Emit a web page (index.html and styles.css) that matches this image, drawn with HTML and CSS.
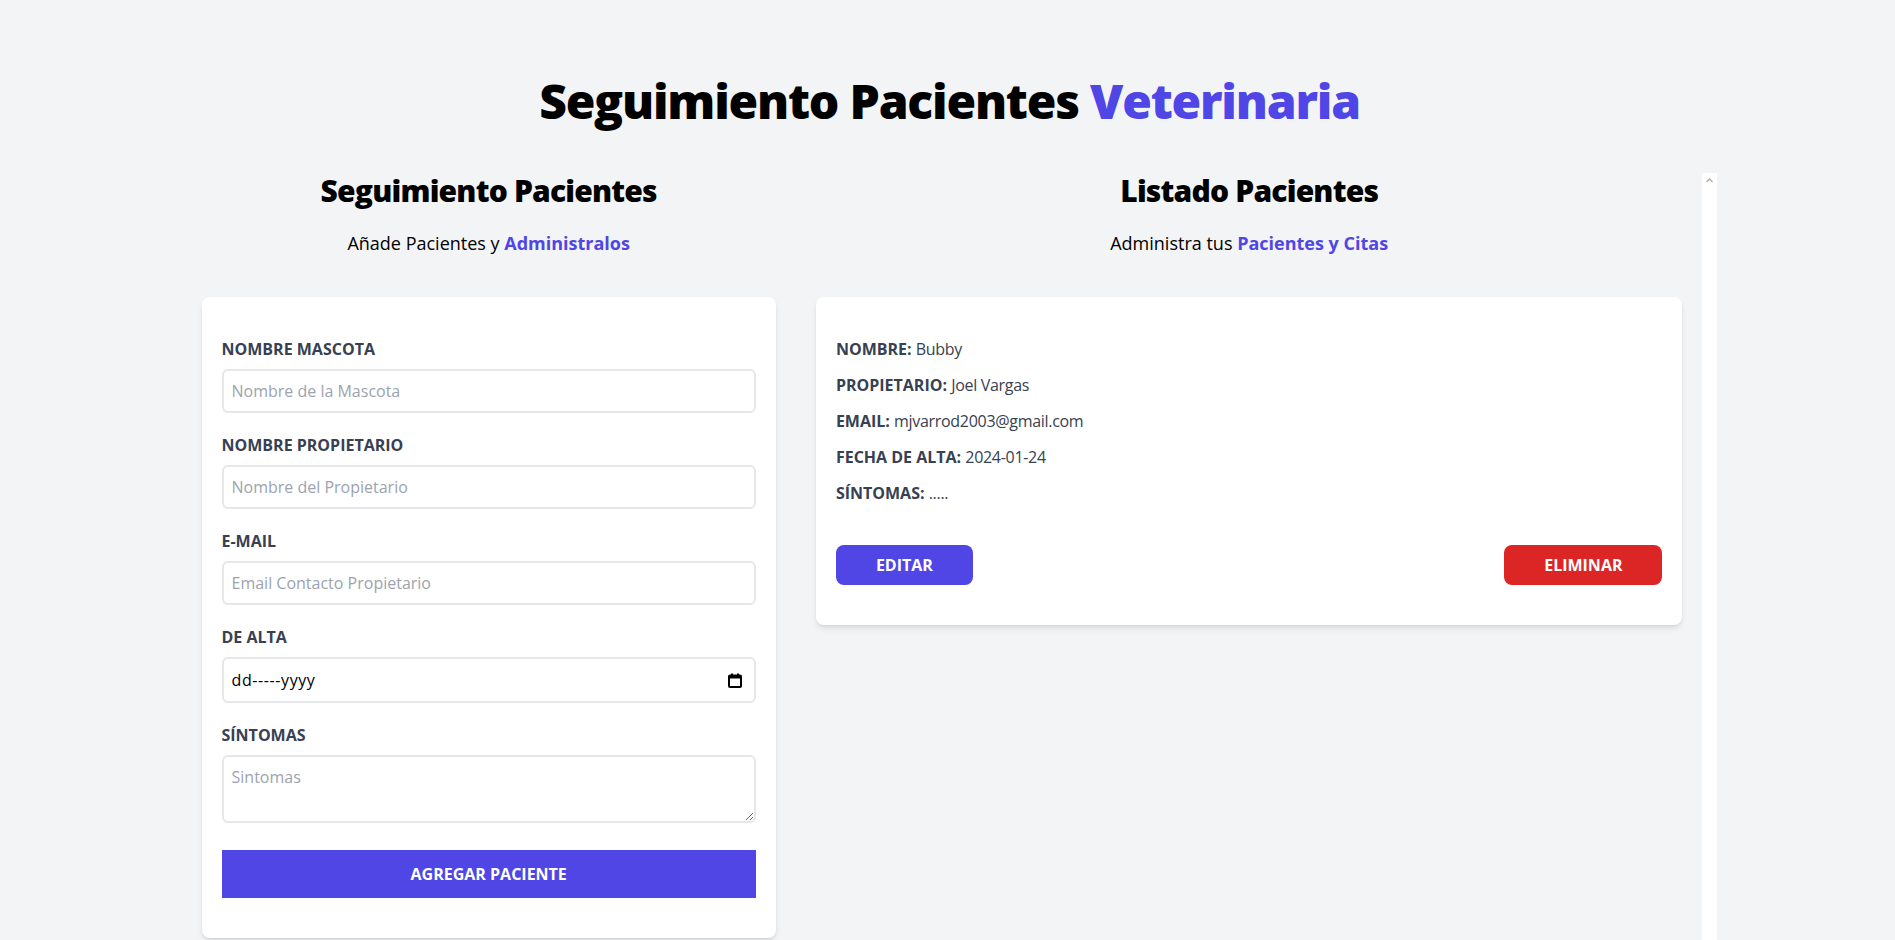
FILE: index.html
```html
<!DOCTYPE html>
<html lang="es">
<head>
    <meta charset="UTF-8">
    <meta name="viewport" content="width=device-width, initial-scale=1.0">
    <title>Seguimiento Pacientes Veterinaria</title>
    <link rel="stylesheet" href="styles.css">
</head>
<body>
    <div class="container">
        <h1 class="title">Seguimiento Pacientes <span class="accent">Veterinaria</span></h1>

        <div class="columns">
            <div class="form-col">
                <h2>Seguimiento Pacientes</h2>
                <p class="intro">Añade Pacientes y <span class="accent-bold">Administralos</span></p>

                <form class="card form">
                    <div class="field">
                        <label for="mascota">Nombre Mascota</label>
                        <input id="mascota" type="text" placeholder="Nombre de la Mascota">
                    </div>
                    <div class="field">
                        <label for="propietario">Nombre Propietario</label>
                        <input id="propietario" type="text" placeholder="Nombre del Propietario">
                    </div>
                    <div class="field">
                        <label for="email">E-mail</label>
                        <input id="email" type="email" placeholder="Email Contacto Propietario">
                    </div>
                    <div class="field">
                        <label for="alta">De Alta</label>
                        <div class="date-box" id="alta">
                            <span class="date-text">dd-----yyyy</span>
                            <svg width="14" height="15" viewBox="0 0 14 15">
                                <rect x="1" y="2.5" width="12" height="11.5" rx="1" fill="none" stroke="#000" stroke-width="2"/>
                                <rect x="1" y="2.5" width="12" height="3" fill="#000"/>
                                <rect x="3" y="0.5" width="2" height="2.5" fill="#000"/>
                                <rect x="9" y="0.5" width="2" height="2.5" fill="#000"/>
                            </svg>
                        </div>
                    </div>
                    <div class="field">
                        <label for="sintomas">Síntomas</label>
                        <textarea id="sintomas" placeholder="Sintomas"></textarea>
                    </div>
                    <button type="button" class="btn-submit">Agregar Paciente</button>
                </form>
            </div>

            <div class="list-col">
                <div class="list-body">
                    <h2>Listado Pacientes</h2>
                    <p class="intro">Administra tus <span class="accent-bold">Pacientes y Citas</span></p>

                    <div class="card patient">
                        <p>Nombre: <span>Bubby</span></p>
                        <p>Propietario: <span>Joel Vargas</span></p>
                        <p>Email: <span>mjvarrod2003@gmail.com</span></p>
                        <p>Fecha de alta: <span>2024-01-24</span></p>
                        <p>Síntomas: <span>.....</span></p>
                        <div class="actions">
                            <button type="button" class="btn btn-edit">Editar</button>
                            <button type="button" class="btn btn-delete">Eliminar</button>
                        </div>
                    </div>
                </div>
                <div class="scroll-track">
                    <svg width="15" height="15" viewBox="0 0 15 15">
                        <path d="M4.5 9 L7.5 6 L10.5 9" fill="none" stroke="#bfb0b0" stroke-width="1.6"/>
                    </svg>
                </div>
            </div>
        </div>
    </div>
</body>
</html>
```

FILE: styles.css
```css
* {
    box-sizing: border-box;
}
body {
    margin: 0;
    background-color: #f3f4f6;
    font-family: "Open Sans", "Noto Sans", sans-serif;
    font-size: 16px;
    line-height: 24px;
    color: #000;
    overflow: hidden;
}
.container {
    width: 1540px;
    margin: 0 auto;
    padding-left: 4px;
    padding-top: 77px;
}
.title {
    margin: 0;
    font-size: 48px;
    line-height: 48px;
    font-weight: 800;
    letter-spacing: -1.2px;
    text-align: center;
}
.accent {
    color: #4f46e5;
}
.accent-bold {
    color: #4f46e5;
    font-weight: 700;
}
.columns {
    display: flex;
    margin-top: 48px;
}
.form-col {
    width: 614.4px;
}
.list-col {
    display: flex;
    width: 921.6px;
    height: 767px;
}
.list-body {
    flex: 1;
}
.scroll-track {
    width: 15px;
    background: #fff;
}
.scroll-track svg {
    display: block;
}
h2 {
    margin: 0;
    font-size: 30px;
    line-height: 36px;
    font-weight: 800;
    letter-spacing: -0.8px;
    text-align: center;
}
.intro {
    margin: 20px 0 40px;
    font-size: 18px;
    line-height: 28px;
    text-align: center;
}
.card {
    margin: 0 20px 40px;
    background: #fff;
    border-radius: 8px;
    box-shadow: 0 4px 6px -1px rgba(0, 0, 0, 0.1), 0 2px 4px -2px rgba(0, 0, 0, 0.1);
    padding: 40px 20px;
}
.field {
    margin-bottom: 20px;
}
.field label {
    display: block;
    color: #374151;
    font-weight: 700;
    text-transform: uppercase;
}
.field input,
.field textarea,
.date-box {
    display: block;
    width: 100%;
    margin-top: 8px;
    padding: 8px;
    border: 2px solid #e5e7eb;
    border-radius: 6px;
    font-family: inherit;
    font-size: 16px;
    line-height: 24px;
    color: #000;
    background: #fff;
}
.field textarea {
    height: 68px;
}
.field input::placeholder,
.field textarea::placeholder {
    color: #9ca3af;
}
.date-box {
    display: flex;
    align-items: center;
    justify-content: space-between;
    height: 46px;
    padding-right: 12px;
}
.date-text {
    letter-spacing: 0.6px;
}
.btn-submit {
    display: block;
    width: 100%;
    margin-top: 27px;
    padding: 12px;
    border: 0;
    background: #4f46e5;
    color: #fff;
    font-family: inherit;
    font-size: 16px;
    line-height: 24px;
    font-weight: 700;
    text-transform: uppercase;
}
.patient p {
    margin: 0 0 12px;
    color: #374151;
    font-weight: 700;
    text-transform: uppercase;
}
.patient p span {
    font-weight: 400;
    text-transform: none;
    letter-spacing: -0.3px;
}
.actions {
    display: flex;
    justify-content: space-between;
    margin-top: 40px;
}
.btn {
    padding: 8px 40px;
    border: 0;
    border-radius: 8px;
    color: #fff;
    font-family: inherit;
    font-size: 16px;
    line-height: 24px;
    font-weight: 700;
    text-transform: uppercase;
}
.btn-edit {
    background: #4f46e5;
}
.btn-delete {
    background: #dc2626;
}
```
